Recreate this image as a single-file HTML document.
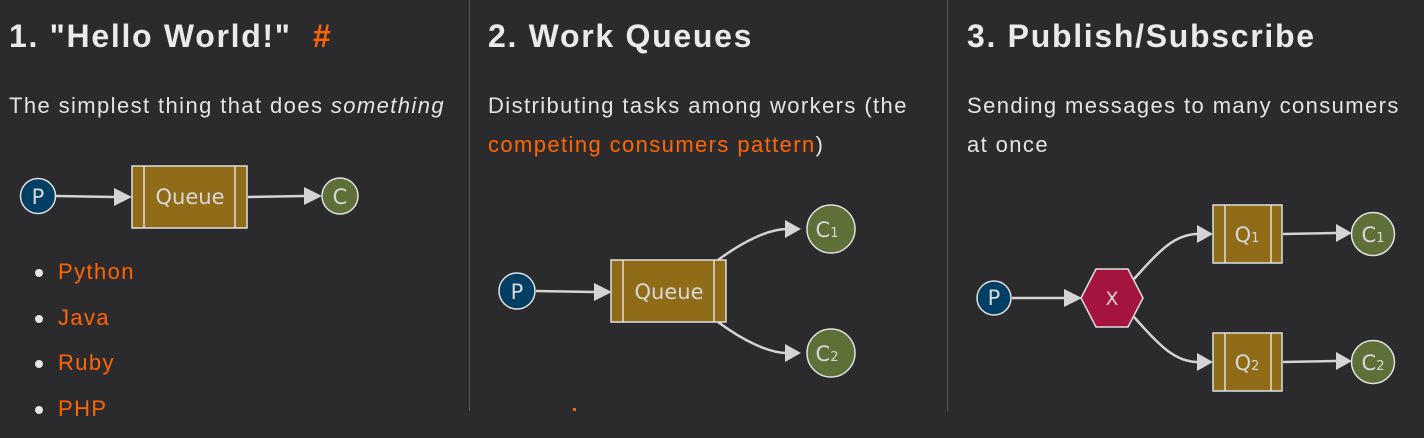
<!DOCTYPE html>
<html><head><meta charset="utf-8"><style>
html,body{margin:0;padding:0;background:#2b2b2d;width:1424px;height:411px;overflow:hidden;font-family:"Liberation Sans",sans-serif;color:#e8e8e8}
.d1{position:absolute;left:469px;top:0;width:1px;height:411px;background:#5a5a5c}
.d2{position:absolute;left:947px;top:0;width:1px;height:411px;background:#5a5a5c}
h2{position:absolute;margin:0;font-size:32px;font-weight:bold;top:18px;white-space:nowrap;color:#eaeaea;letter-spacing:1.7px}
p{position:absolute;margin:0;font-size:22px;line-height:39px;top:86px;color:#e4e4e4;letter-spacing:1.4px}
a{color:#ff6600;text-decoration:none}
ul{position:absolute;margin:0;padding:0;list-style:none;left:35px;top:256px}
li{font-size:22px;height:45.6px;line-height:32px;position:relative;padding-left:23px;color:#ff6600;letter-spacing:1.4px}
li:before{content:"";position:absolute;left:0;top:13px;width:8px;height:8px;border-radius:50%;background:#e6e6e6}
svg{position:absolute;left:0;top:0}
svg text{font-family:"DejaVu Sans",sans-serif;fill:#d8d8d8}
</style></head><body>
<div class="d1"></div><div class="d2"></div>
<h2 style="left:9px">1. "Hello World!" &nbsp;<span style="color:#ff6600">#</span></h2>
<p style="left:9px;white-space:nowrap">The simplest thing that does <i>something</i></p>
<ul><li>Python</li><li>Java</li><li>Ruby</li><li>PHP</li></ul>
<h2 style="left:488px">2. Work Queues</h2>
<p style="left:488px;width:440px">Distributing tasks among workers (the <a>competing consumers pattern</a>)</p>
<h2 style="left:967px">3. Publish/Subscribe</h2>
<p style="left:967px;width:440px">Sending messages to many consumers at once</p>
<svg width="1424" height="411">
<g stroke="#d4d4d4" stroke-width="2.5" fill="none">
<path d="M56,196 L114,197"/>
<path d="M248,197 L304,196"/>
<path d="M536,291 L594,292"/>
<path d="M718,260 C745,240 770,229 787,229"/>
<path d="M718,322 C745,342 770,353 787,353"/>
<path d="M1012,298 L1064,298"/>
<path d="M1134,279 C1160,250 1175,234 1198,234"/>
<path d="M1134,317 C1160,346 1175,362 1198,362"/>
<path d="M1283,234 L1336,233"/>
<path d="M1283,362 L1336,361"/>
</g>
<g fill="#d4d4d4">
<path d="M114,188 L132,197 L114,206z"/>
<path d="M304,187 L322,196 L304,205z"/>
<path d="M594,283 L612,292 L594,301z"/>
<path d="M785,220 L801,229 L785,238z"/>
<path d="M785,344 L801,353 L785,362z"/>
<path d="M1064,289 L1082,298 L1064,307z"/>
<path d="M1197,225 L1213,234 L1197,243z"/>
<path d="M1197,353 L1213,362 L1197,371z"/>
<path d="M1336,224 L1352,233 L1336,242z"/>
<path d="M1336,352 L1352,361 L1336,370z"/>
</g>
<g stroke="#e0e0e0" stroke-width="1.5">
<circle cx="38" cy="196" r="17.5" fill="#003f63"/>
<circle cx="340" cy="196" r="18" fill="#5f6f38"/>
<circle cx="517" cy="291" r="18" fill="#003f63"/>
<circle cx="831" cy="229" r="24" fill="#5f6f38"/>
<circle cx="831" cy="353" r="24" fill="#5f6f38"/>
<circle cx="994" cy="298" r="17" fill="#003f63"/>
<circle cx="1373" cy="234" r="21.5" fill="#5f6f38"/>
<circle cx="1373" cy="362" r="21.5" fill="#5f6f38"/>
<rect x="132" y="166" width="115" height="62" fill="#916c18"/>
<line x1="144" y1="166" x2="144" y2="228"/><line x1="235" y1="166" x2="235" y2="228"/>
<rect x="611" y="260" width="115" height="62" fill="#916c18"/>
<line x1="623" y1="260" x2="623" y2="322"/><line x1="714" y1="260" x2="714" y2="322"/>
<rect x="1213" y="205" width="69" height="58" fill="#916c18"/>
<line x1="1225" y1="205" x2="1225" y2="263"/><line x1="1271" y1="205" x2="1271" y2="263"/>
<rect x="1213" y="333" width="69" height="58" fill="#916c18"/>
<line x1="1225" y1="333" x2="1225" y2="391"/><line x1="1271" y1="333" x2="1271" y2="391"/>
<path d="M1081,298 L1096,269 L1128,269 L1143,298 L1128,327 L1096,327z" fill="#a5143e"/>
</g>
<g font-size="21" text-anchor="middle">
<text x="38" y="204">P</text>
<text x="340" y="204">C</text>
<text x="190" y="204">Queue</text>
<text x="517" y="299">P</text>
<text x="669" y="299">Queue</text>
<text x="827" y="237">C<tspan font-size="13">1</tspan></text>
<text x="827" y="361">C<tspan font-size="13">2</tspan></text>
<text x="994" y="305">P</text>
<text x="1112" y="305" font-size="19">X</text>
<text x="1247" y="242">Q<tspan font-size="13">1</tspan></text>
<text x="1247" y="370">Q<tspan font-size="13">2</tspan></text>
<text x="1373" y="242">C<tspan font-size="13">1</tspan></text>
<text x="1373" y="370">C<tspan font-size="13">2</tspan></text>
</g>
<rect x="573" y="408" width="3" height="3" fill="#ff6600"/>
</svg>
</body></html>
